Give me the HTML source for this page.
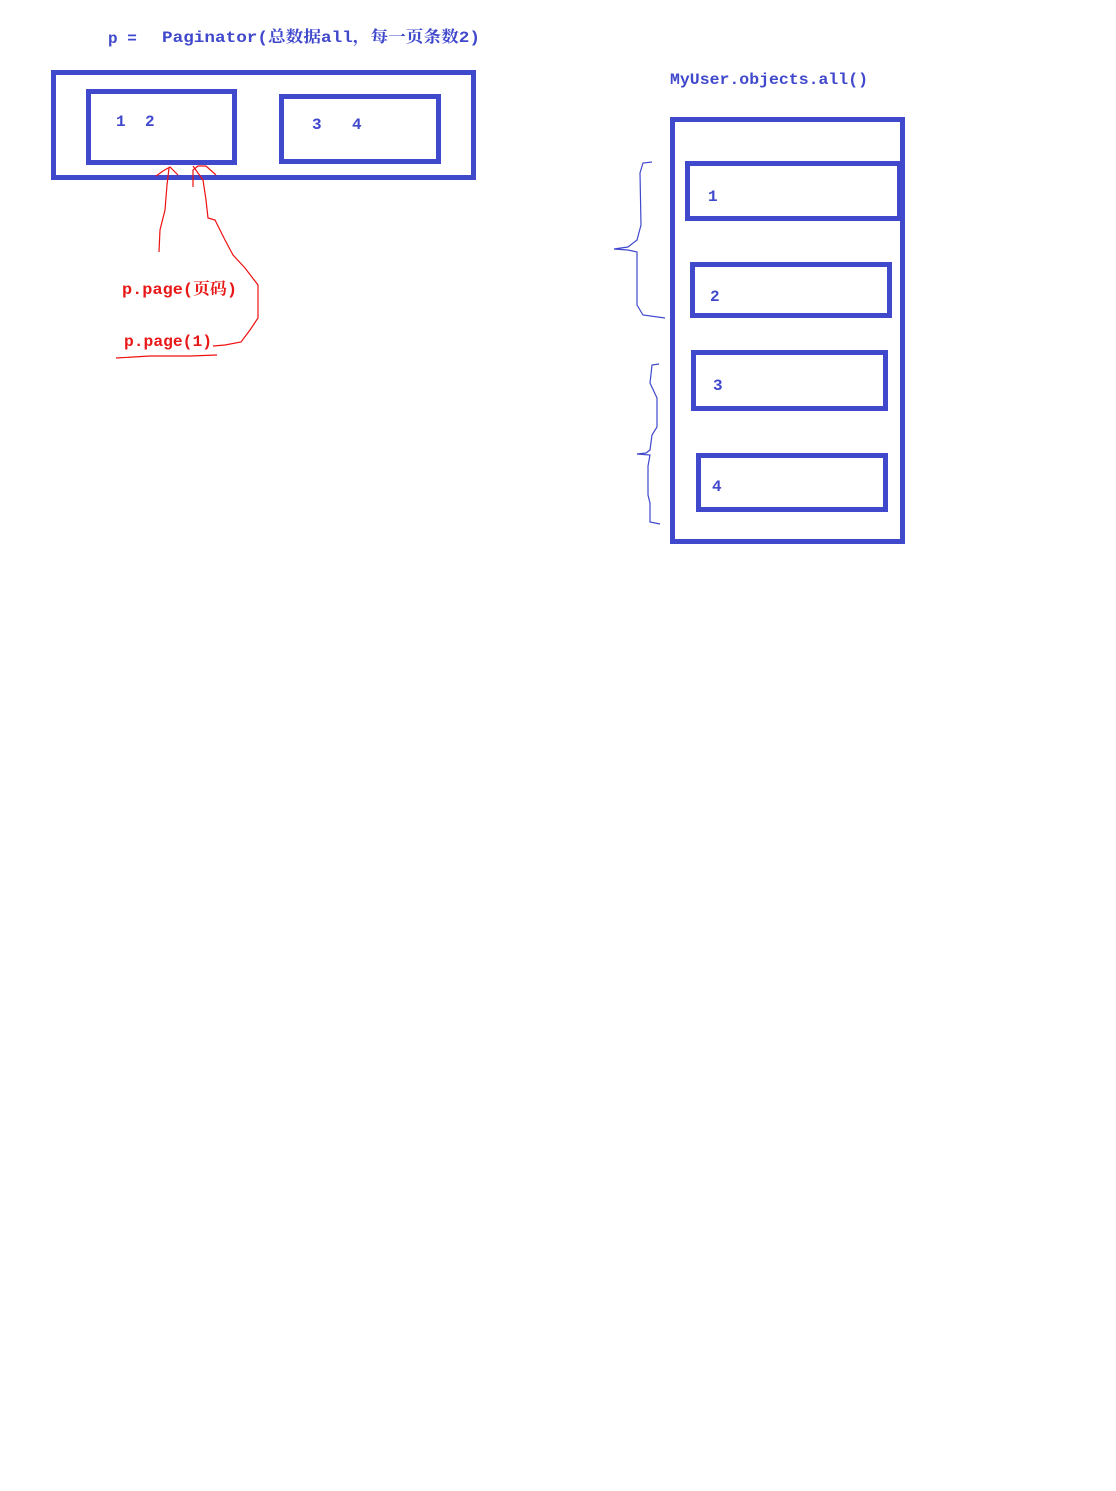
<!DOCTYPE html>
<html><head><meta charset="utf-8"><style>
html,body{margin:0;padding:0;background:#fff;}
svg{display:block}
text{font-family:"Liberation Mono","Noto Serif CJK SC",monospace;font-weight:bold;font-size:16px}
</style></head><body>
<svg width="1116" height="1491" viewBox="0 0 1116 1491" xmlns="http://www.w3.org/2000/svg">
<g fill="none" stroke="#4048cc" stroke-width="5">
<rect x="53.5" y="72.5" width="420" height="105"/>
<rect x="88.5" y="91.5" width="146" height="71"/>
<rect x="281.5" y="96.5" width="157" height="65"/>
<rect x="672.5" y="119.5" width="230" height="422"/>
<rect x="687.5" y="163.5" width="212" height="55"/>
<rect x="692.5" y="264.5" width="197" height="51"/>
<rect x="693.5" y="352.5" width="192" height="56"/>
<rect x="698.5" y="455.5" width="187" height="54"/>
</g>
<g fill="#4048cc">
<text x="108" y="43">p =</text>
<text x="162" y="42" textLength="318" lengthAdjust="spacingAndGlyphs">Paginator(总数据all，每一页条数2)</text>
<text x="116" y="126">1</text><text x="145" y="126">2</text>
<text x="312" y="129">3</text><text x="352" y="129">4</text>
<text x="670" y="84" textLength="198" lengthAdjust="spacingAndGlyphs">MyUser.objects.all()</text>
<text x="708" y="201">1</text>
<text x="710" y="301">2</text>
<text x="713" y="390">3</text>
<text x="712" y="491">4</text>
</g>
<g fill="#e81818">
<text x="122" y="294" textLength="115" lengthAdjust="spacingAndGlyphs">p.page(页码)</text>
<text x="124" y="346" textLength="88" lengthAdjust="spacingAndGlyphs">p.page(1)</text>
</g>
<g fill="none" stroke="#ee1111" stroke-width="1.2">
<path d="M159 252 L160 230 L165 210 L167 185 L169 168"/>
<path d="M156 176 L163 171 L170 167 L178 175"/>
<path d="M193 187 L193 170 L198 166 L206 166 L216 175"/>
<path d="M193 166 L203 180 L206 200 L208 218 L215 220 L225 240 L233 255 L245 268 L258 285 L258 318 L250 330 L241 342 L225 345 L213 346"/>
<path d="M116 358 L150 356 L190 356 L217 355"/>
</g>
<g fill="none" stroke="#4048cc" stroke-width="1.2">
<path d="M652 162 L643 163 L640 173 L641 225 L637 240 L628 247 L614 249 L628 250 L637 252 L637 305 L643 315 L665 318"/>
<path d="M659 364 L652 365 L650 383 L657 398 L657 427 L652 435 L650 450 L646 453 L637 454 L650 455 L648 466 L648 495 L650 503 L650 522 L660 524"/>
</g>
</svg>
</body></html>
